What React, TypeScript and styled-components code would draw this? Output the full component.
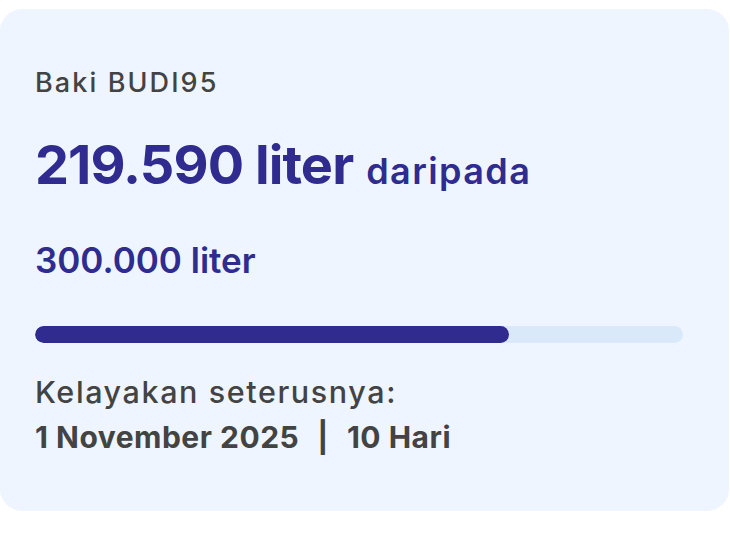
import React from "react";
import styled, { createGlobalStyle } from "styled-components";

const GlobalStyle = createGlobalStyle`
  html, body { margin: 0; padding: 0; background: #ffffff; }
  body { font-family: Inter, "Noto Sans", sans-serif; -webkit-font-smoothing: antialiased; }
`;

const Page = styled.div`
  padding: 9px 1px 0 0;
`;

const Card = styled.section`
  box-sizing: border-box;
  height: 502px;
  background: #eef5fe;
  border-radius: 22px;
  padding: 61px 46px 0 35px;
  display: flex;
  flex-direction: column;
`;

const Label = styled.div`
  font-size: 27px;
  line-height: 26px;
  font-weight: 500;
  letter-spacing: 2.1px;
  color: #434343;
`;

const AmountRow = styled.div`
  display: flex;
  align-items: baseline;
  gap: 13px;
  margin-top: 42px;
  color: #2f2b8f;
`;

const Amount = styled.span`
  font-size: 54px;
  line-height: 54px;
  font-weight: 700;
  letter-spacing: -0.9px;
`;

const Of = styled.span`
  font-size: 36px;
  line-height: 36px;
  font-weight: 600;
  letter-spacing: 1.4px;
`;

const Total = styled.div`
  margin-top: 51px;
  font-size: 35px;
  line-height: 35px;
  font-weight: 600;
  color: #2f2b8f;
`;

const Track = styled.div`
  margin-top: 48px;
  height: 17px;
  border-radius: 9px;
  background: #d9e9fa;
  overflow: hidden;
`;

const Fill = styled.div`
  height: 100%;
  border-radius: 9px;
  background: #2f2b8f;
`;

const NextLabel = styled.div`
  margin-top: 34px;
  font-size: 30.5px;
  line-height: 30px;
  font-weight: 500;
  letter-spacing: 1.6px;
  color: #434343;
`;

const NextDate = styled.div`
  margin-top: 15px;
  display: flex;
  align-items: baseline;
  gap: 18px;
  font-size: 30px;
  line-height: 30px;
  font-weight: 700;
  letter-spacing: 0.5px;
  color: #434343;
`;

const Sep = styled.span`
  font-weight: 700;
`;

const used = 219590;
const quota = 300000;

export default function App() {
  const pct = (used / quota) * 100;
  return (
    <>
      <GlobalStyle />
      <Page>
        <Card>
          <Label>Baki BUDI95</Label>
          <AmountRow>
            <Amount>219.590 liter</Amount>
            <Of>daripada</Of>
          </AmountRow>
          <Total>300.000 liter</Total>
          <Track>
            <Fill style={{ width: `${pct}%` }} />
          </Track>
          <NextLabel>Kelayakan seterusnya:</NextLabel>
          <NextDate>
            <span>1 November 2025</span>
            <Sep>|</Sep>
            <span>10 Hari</span>
          </NextDate>
        </Card>
      </Page>
    </>
  );
}
